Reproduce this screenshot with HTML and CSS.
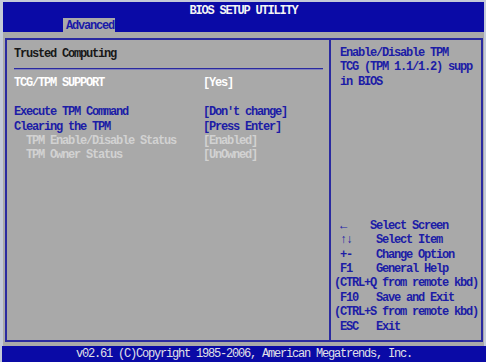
FILE: index.html
```html
<!DOCTYPE html>
<html lang="en">
<head>
    <meta charset="UTF-8">
    <title>BIOS Setup Utility</title>
    <link rel="stylesheet" href="styles.css">
</head>
<body>
    <div class="top">
        <div class="title">BIOS SETUP UTILITY</div>
        <div class="tabs"><span class="tab">Advanced</span></div>
    </div>

    <div class="main">
        <div class="frame">
            <div class="left">
                <div class="heading">Trusted Computing</div>
                <div class="rule"></div>
                <div class="row white"><span class="label">TCG/TPM SUPPORT</span><span>[Yes]</span></div>
                <div class="row blank"></div>
                <div class="row blue"><span class="label">Execute TPM Command</span><span>[Don't change]</span></div>
                <div class="row blue"><span class="label">Clearing the TPM</span><span>[Press Enter]</span></div>
                <div class="row dim"><span class="label">  TPM Enable/Disable Status</span><span>[Enabled]</span></div>
                <div class="row dim"><span class="label">  TPM Owner Status</span><span>[UnOwned]</span></div>
            </div>
            <div class="right">
                <div class="help"> Enable/Disable TPM
 TCG (TPM 1.1/1.2) supp
 in BIOS</div>
                <div class="keys"> &larr;    Select Screen
 &uarr;&darr;    Select Item
 +-    Change Option
 F1    General Help
(CTRL+Q from remote kbd)
 F10   Save and Exit
(CTRL+S from remote kbd)
 ESC   Exit</div>
            </div>
        </div>
    </div>

    <div class="bottom">v02.61 (C)Copyright 1985-2006, American Megatrends, Inc.</div>
</body>
</html>
```

FILE: styles.css
```css
body {
    margin: 0;
    background-color: #c4cad8;
    font-family: "Liberation Mono", "DejaVu Sans Mono", monospace;
    font-size: 12px;
    font-weight: bold;
    letter-spacing: -1.2px;
    line-height: 14.4px;
}
.top {
    margin: 2px 2px 0 3px;
    height: 30px;
    background-color: #0a0aa6;
    display: flex;
    flex-direction: column;
}
.title {
    color: #f4f4f4;
    text-align: center;
    padding-top: 2px;
    height: 14px;
}
.tabs {
    padding-left: 60px;
    display: flex;
    align-items: flex-end;
    flex: 1;
}
.tab {
    background-color: #a9a9a9;
    color: #1a1aa8;
    height: 16px;
    line-height: 17px;
    padding: 0 1px 0 3px;
}
.main {
    margin: 0 2px 0 3px;
    height: 314px;
    background-color: #a9a9a9;
    padding: 6px 1px 0 2px;
    box-sizing: border-box;
}
.frame {
    height: 304px;
    border: 2px solid #2a2aa0;
    box-sizing: border-box;
    display: flex;
}
.left {
    width: 324px;
    border-right: 2px solid #2a2aa0;
    padding: 7px 0 0 7px;
    box-sizing: border-box;
}
.heading {
    color: #181818;
}
.rule {
    height: 1px;
    margin: 7px 6px 6px 0;
    background-color: #2a2aa0;
    border-bottom: 1px solid #8080b8;
}
.row {
    display: flex;
    height: 14.4px;
}
.label {
    width: 189px;
    white-space: pre;
}
.white { color: #ffffff; }
.blue { color: #1c1ca6; }
.dim { color: #d2d2d2; }
.right {
    flex: 1;
    padding: 6px 0 6px 3px;
    display: flex;
    flex-direction: column;
    justify-content: space-between;
    color: #1c1ca6;
}
.help, .keys {
    white-space: pre;
}
.bottom {
    margin-left: 2px;
    height: 16px;
    background-color: #0a0aa6;
    color: #e0e0e8;
    text-align: center;
    font-weight: normal;
    line-height: 16px;
}
```
